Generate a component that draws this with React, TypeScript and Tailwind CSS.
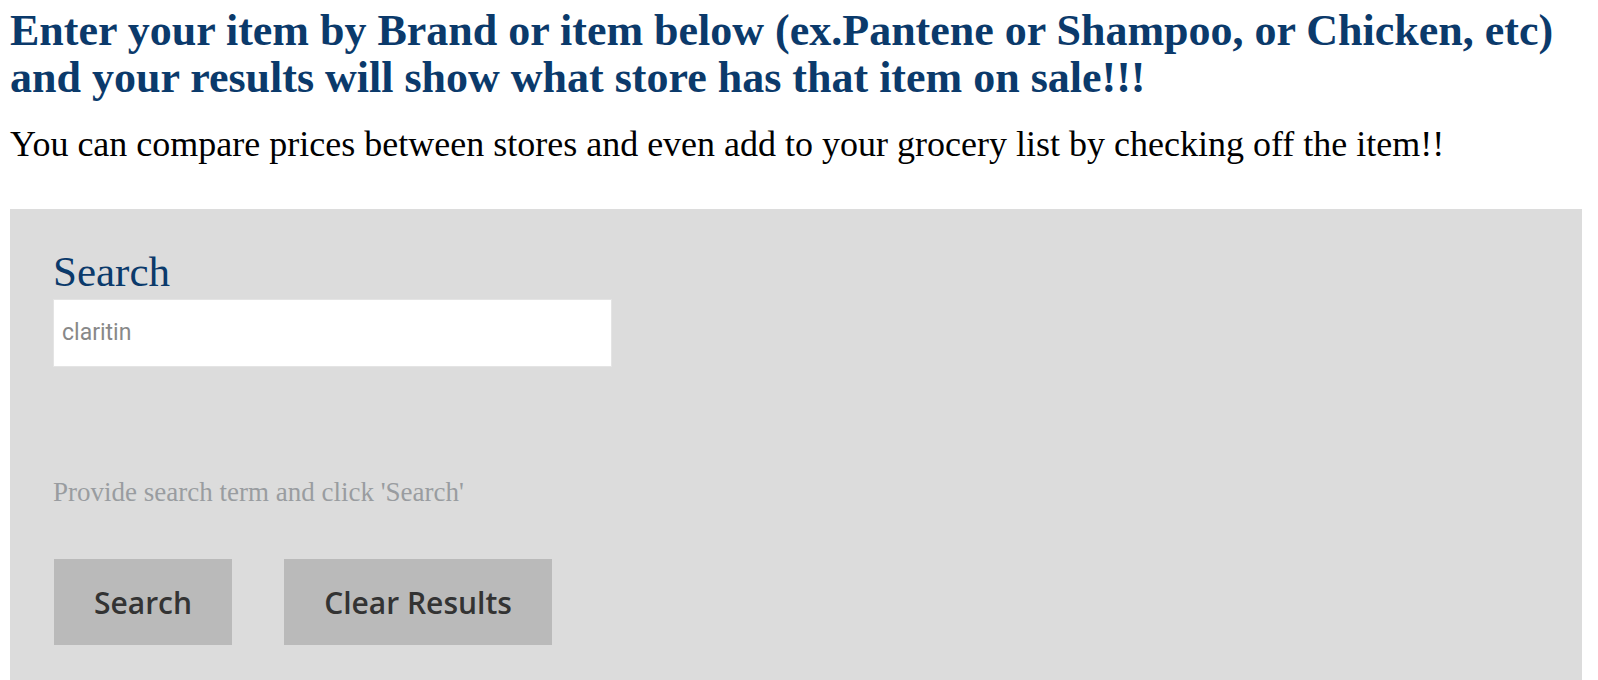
export default function App() {
  return (
    <div className="min-h-[680px] bg-white pl-[10px] pr-[16px] pt-[7px] overflow-hidden">
      <h1 className="m-0 text-[44px] leading-[47px] font-bold text-[#0b3a6b] [font-family:'Liberation_Serif',serif]">
        Enter your item by Brand or item below (ex.Pantene or Shampoo, or Chicken, etc) and your results will show what store has that item on sale!!!
      </h1>
      <p className="mt-[22px] text-[36px] leading-[43px] text-black [font-family:'Liberation_Serif',serif]">
        You can compare prices between stores and even add to your grocery list by checking off the item!!
      </p>
      <div className="mt-[43px] h-[480px] bg-[#dcdcdc] pl-[43px] pt-[39px]">
        <div className="text-[43px] leading-[48px] text-[#0b3a6b] [font-family:'Liberation_Serif',serif]">Search</div>
        <div className="mt-[3px] w-[559px] h-[68px] bg-white border border-[#e4e4e4] flex items-center px-[8px]">
          <span className="text-[23px] text-[#888888] [font-family:Roboto,sans-serif]">claritin</span>
        </div>
        <div className="mt-[110px] text-[27px] leading-[31px] text-[#999ca0] [font-family:'Liberation_Serif',serif]">
          Provide search term and click 'Search'
        </div>
        <div className="mt-[51px] flex gap-[52px] pl-[1px]">
          <button className="w-[178px] h-[86px] bg-[#bababa] text-[30px] font-semibold text-[#333333] [font-family:'Open_Sans',sans-serif]">Search</button>
          <button className="w-[268px] h-[86px] bg-[#bababa] text-[30px] font-semibold text-[#333333] [font-family:'Open_Sans',sans-serif]">Clear Results</button>
        </div>
      </div>
    </div>
  );
}
